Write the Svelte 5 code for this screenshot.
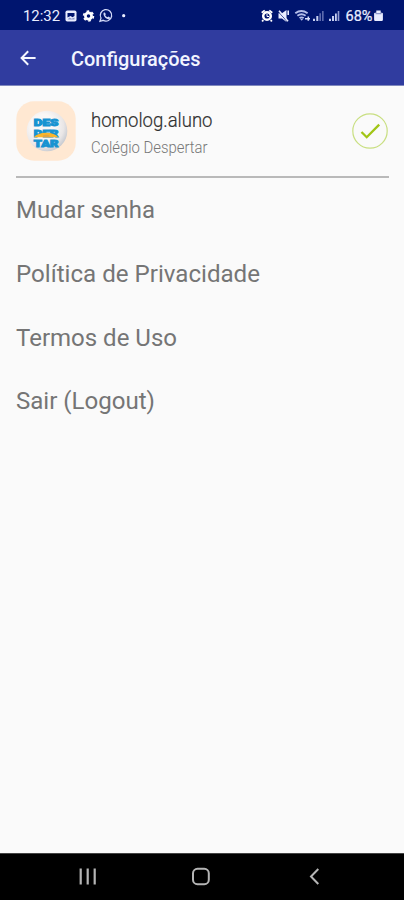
<script>
  const items = ['Mudar senha', 'Política de Privacidade', 'Termos de Uso', 'Sair (Logout)'];
  const widths = [139, 244, 161, 139];
</script>

<div class="screen">
  <div class="status">
    <svg width="404" height="30" viewBox="0 0 404 30" fill="#e9edff">
      <text x="23" y="21" font-size="15" textLength="37" lengthAdjust="spacingAndGlyphs">12:32</text>
      <rect x="65.5" y="10.5" width="11" height="11" rx="1.8" />
      <path d="M67.5 13h7v3l-2 1.2-2-1.2-3 1.5z" fill="#00156f" />
      <path d="M67.5 19.5l2-2 2 1.2 3-1.2v2z" fill="#8996c9" />
      <circle cx="88.5" cy="16" r="3.1" fill="none" stroke="#fff" stroke-width="2.7" />
      <circle cx="88.5" cy="16" r="4.9" fill="none" stroke="#fff" stroke-width="1.7" stroke-dasharray="2.6 2.53" />
      <path d="M100 21.3l1-3.2a5.7 5.7 0 1 1 2.2 2.2z" fill="none" stroke="#d2daf8" stroke-width="1.3" />
      <path d="M103.6 12.8l1.3-.3.9 1.8-.6.9c.5 1 1.2 1.7 2.3 2.1l.9-.7 1.6 1-.3 1.3c-2.8 1.3-7-2.6-6.1-6.1z" fill="#d2daf8" />
      <circle cx="123.7" cy="15.7" r="1.6" />

      <circle cx="267" cy="16" r="3.8" fill="none" stroke="#fff" stroke-width="2.5" />
      <path d="M261.7 12.7l3-2.3M272.3 12.7l-3-2.3M263.2 20l-1 1.6M270.8 20l1 1.6" stroke="#fff" stroke-width="1.8" />
      <path d="M267 14v2.5h2" fill="none" stroke="#fff" />
      <path d="M278.5 13.3h3.5l4.5-3.3v12l-4.5-3.6h-3.5z" />
      <path d="M278.8 12l8.5 9.8" stroke="#00156f" stroke-width="1" />
      <path d="M279 10.8l9 10.5M288.2 10.5v4.5" stroke="#e9edff" stroke-width="1.6" />
      <path d="M295.3 13.3q6-4.5 12.3 0M297.4 15.8q4.2-3 8.2 0M299.5 18.1q2.1-1.5 4.2 0" fill="none" stroke="#b4bee9" stroke-width="1.9" />
      <path d="M300 18.7h3.3l-1.6 2z" fill="#b4bee9" />
      <path d="M305 18.7h5M308.3 16.5v4.2" stroke="#d8dffb" stroke-width="1.6" />
      <path d="M313 18.8h2V21h-2zM316.3 16h2v5h-2z" fill="#c6cff0" />
      <path d="M319.4 13.2h1.5V21h-1.5zM322.1 11h1.5v10h-1.5z" fill="#6572b4" />
      <path d="M329 18.7h2V21h-2zM332 16h2v5h-2zM335 13.5h1.8V21H335z" fill="#c6cff0" />
      <path d="M337.7 11h1.6v10h-1.6z" fill="#929dd0" />
      <text x="345.5" y="21" font-size="15" stroke="#e9edff" stroke-width=".2" textLength="27" lengthAdjust="spacingAndGlyphs">68%</text>
      <path d="M376.3 10.5h4.4v2.3h1.2q1 0 1 1v6q0 1.2-1.2 1.2h-6.4q-1.2 0-1.2-1.2v-6q0-1 1-1h1.2z" />
      <path d="M375.5 13.7h6" stroke="#7582be" />
    </svg>
  </div>

  <header>
    <svg class="back" width="18" height="18" viewBox="0 0 18 18" fill="none" stroke="#f4f6ff" stroke-width="2">
      <path d="M16.6 9H3M9.2 2.3L2.6 9l6.6 6.7" />
    </svg>
    <svg class="title" width="140" height="30" fill="#f2f5ff">
      <text x="0" y="23" font-size="20" font-weight="500" textLength="129.5" lengthAdjust="spacingAndGlyphs">Configurações</text>
    </svg>
  </header>

  <main>
    <section class="account">
      <svg class="logo" width="60" height="60" viewBox="0 0 60 60">
        <defs>
          <radialGradient id="ball" cx=".4" cy=".38" r=".64">
            <stop offset=".45" stop-color="#f9f7f6" />
            <stop offset=".8" stop-color="#e9e6e6" />
            <stop offset="1" stop-color="#c9ccd2" />
          </radialGradient>
        </defs>
        <rect x=".3" y=".3" width="59.4" height="59.4" rx="17.5" fill="#ffe8d2" />
        <circle cx="31" cy="30" r="20.3" fill="url(#ball)" />
        <g class="brand" fill="#1793d1" stroke="#1793d1" stroke-width=".9">
          <text x="17.8" y="25" textLength="24.6" lengthAdjust="spacingAndGlyphs">DES</text>
          <text x="17.8" y="35.6" textLength="24.6" lengthAdjust="spacingAndGlyphs">PER</text>
          <text x="17.8" y="46.2" textLength="24.6" lengthAdjust="spacingAndGlyphs">TAR</text>
        </g>
        <path d="M17.8 36.2q4-4.2 12.3-4.4 8.3.2 12.2 4.4z" fill="#f9b52b" />
        <path d="M27 36.2v-1.8q3.2-1.2 6.4 0v1.8" fill="#e0a443" />
      </svg>
      <svg class="names" width="150" height="60">
        <text x="0" y="25.5" font-size="20.5" font-weight="300" fill="#303030" stroke="#303030" stroke-width=".2" textLength="121.5" lengthAdjust="spacingAndGlyphs">homolog.aluno</text>
        <text x="0" y="52" font-size="17" font-weight="300" fill="#777" textLength="116.5" lengthAdjust="spacingAndGlyphs">Colégio Despertar</text>
      </svg>
      <svg class="check" width="38" height="38" viewBox="0 0 38 38" fill="none">
        <circle cx="19" cy="19" r="17.2" stroke="#c9df82" stroke-width="1.2" />
        <path d="M10.5 20l5.2 5.2L28.2 12.6" stroke="#a1c516" stroke-width="2.3" />
      </svg>
    </section>

    <nav>
      {#each items as item, i}
        <div class="item">
          <svg width="300" height="63">
            <text x="0" y="40.3" font-size="24" fill="#757575" textLength={widths[i]} lengthAdjust="spacingAndGlyphs">{item}</text>
          </svg>
        </div>
      {/each}
    </nav>
  </main>

  <footer>
    <svg width="404" height="46" viewBox="0 0 404 46" fill="none" stroke="#b5b5b5" stroke-width="2">
      <path d="M80.7 14.5v16M87.7 14.5v16M94.7 14.5v16" stroke-width="2.2" />
      <rect x="193" y="14.8" width="15.8" height="15.4" rx="4.5" />
      <path d="M318.3 15l-7.3 7.5 7.3 7.5" />
    </svg>
  </footer>
</div>

<style>
  :global(body) { margin: 0; }
  .screen {
    width: 404px;
    height: 900px;
    display: flex;
    flex-direction: column;
    background: #fafafa;
    font-family: Roboto, sans-serif;
    overflow: hidden;
  }
  svg { display: block; flex: none; }
  .status { height: 30px; background: #00156f; }
  header {
    box-sizing: border-box;
    height: 56px;
    display: flex;
    align-items: center;
    background: #303c9f;
    border-bottom: 1px solid #8089bd;
    padding-left: 19px;
  }
  .title { margin-left: 34px; }
  main { flex: 1; padding: 0 15px 0 16px; }
  .account {
    box-sizing: border-box;
    height: 92px;
    display: flex;
    padding-top: 15px;
    border-bottom: 2px solid #b9b9b9;
  }
  .brand { font-size: 8.8px; font-weight: 900; }
  .names { margin-left: 15px; }
  .check { margin: 11px 0 0 auto; }
  .item { height: 63.8px; }
  footer { height: 47px; background: #000; border-top: 1px solid #444; box-sizing: border-box; }
</style>
